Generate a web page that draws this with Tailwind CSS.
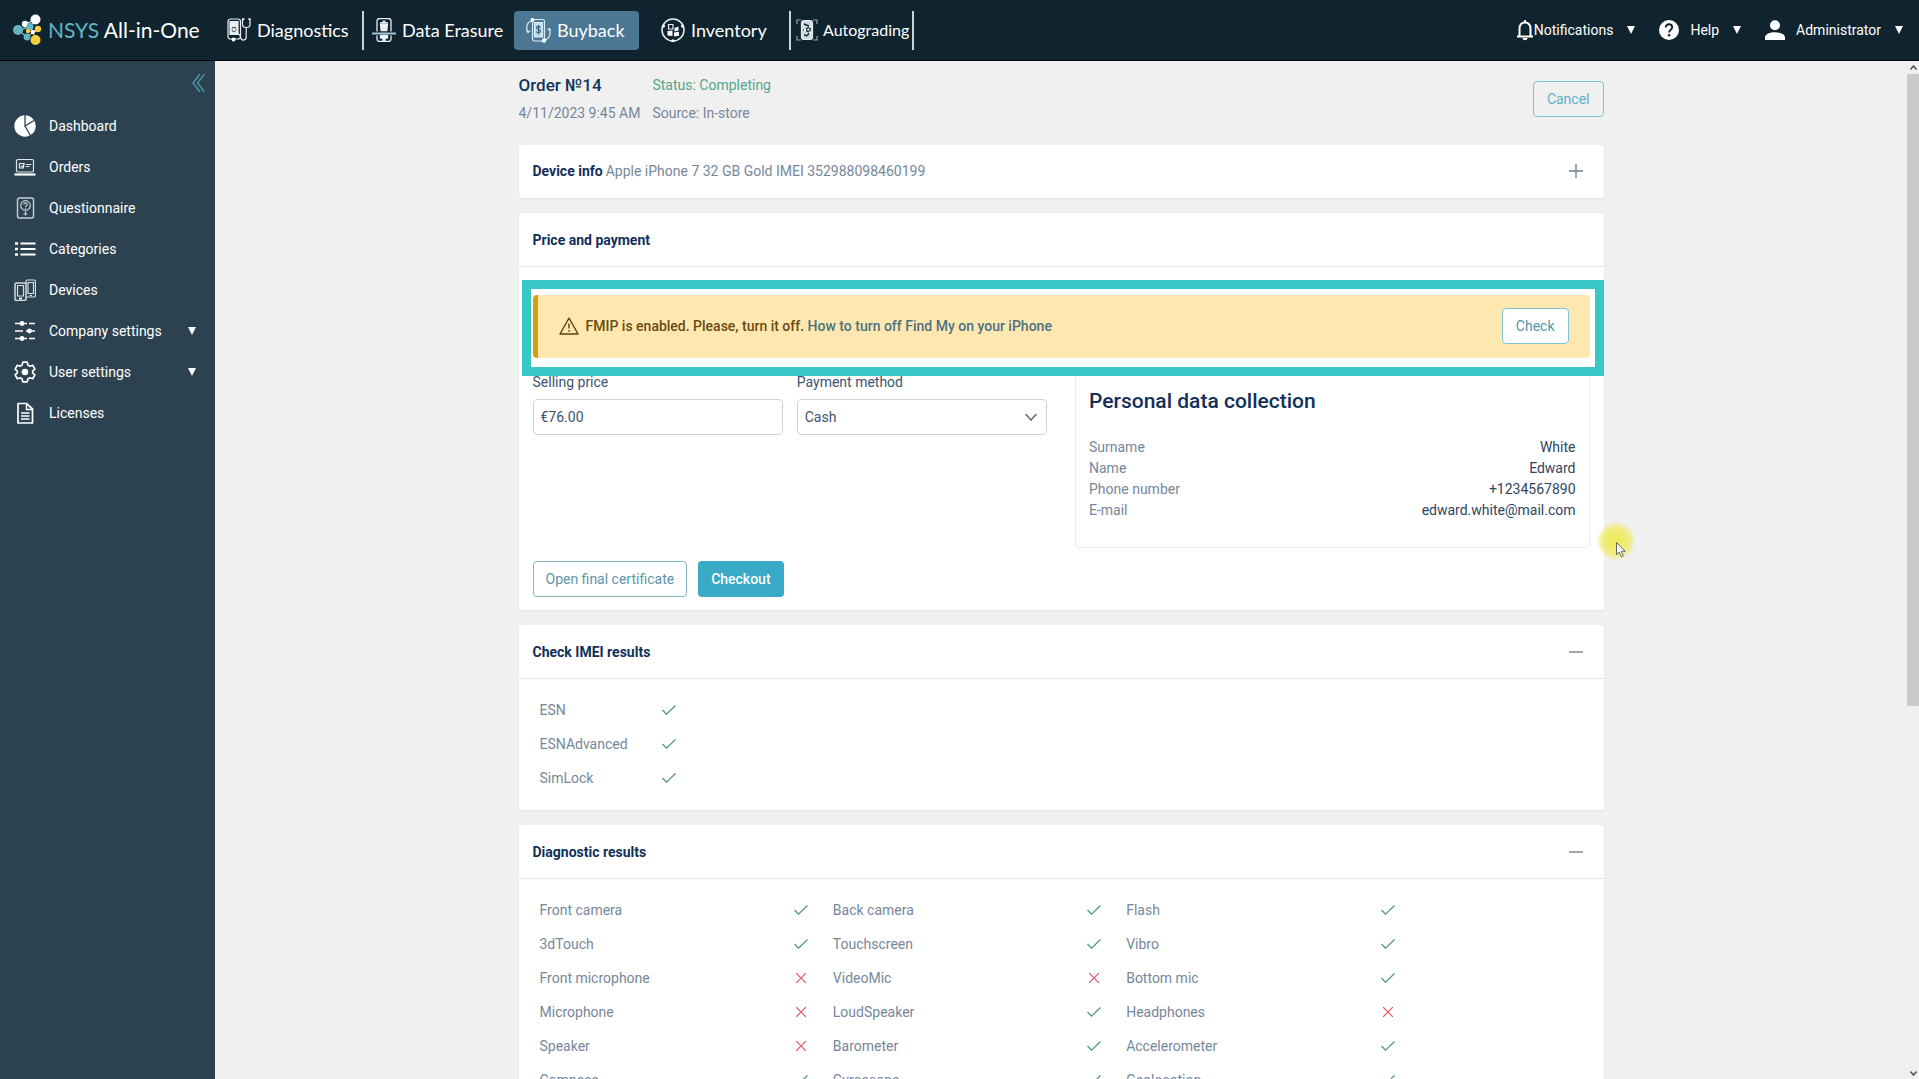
<!DOCTYPE html>
<html lang="en">
<head>
    <meta charset="UTF-8">
    <meta name="viewport" content="width=device-width, initial-scale=1.0">
    <title>NSYS Buyback - Order №14</title>
    <script src="https://cdn.jsdelivr.net/npm/@tailwindcss/browser@4"></script>
</head>
<body class="flex h-screen flex-col overflow-hidden bg-[#f0f0f0] font-['Roboto',sans-serif] text-sm text-[#76879b]">

    <!-- Top bar -->
    <header class="flex h-[61px] shrink-0 items-center border-b border-black bg-[#10242f] pb-2.5 pt-2.5 text-white">
        <a href="#" class="flex w-[215px] items-center gap-[7px] pl-[13px] font-['Lato',sans-serif] text-[21px]">
            <svg class="h-8 w-7" viewBox="0 0 28 32">
                <g stroke="#fff" stroke-width="1"><path d="M12 10 22 6M12 10l8 8-7 6M20 18l5-2M17 13l3 5" fill="none"/></g>
                <g stroke="#6fb9c6" stroke-width="1.500"><path d="M5 16 17 13M17 13l5-7M14 23 5 16"/></g>
                <path d="M20 18l3 9M15 17l5 1 5-2" stroke="#f5d039" fill="none"/>
                <circle cx="22.500" cy="5.500" r="5" fill="#fff"/><circle cx="12" cy="10" r="3.200" fill="#fff"/>
                <circle cx="5" cy="16" r="5" fill="#65b4c3"/><circle cx="17" cy="12.500" r="3.600" fill="#65b4c3"/>
                <circle cx="14" cy="23" r="3.400" fill="#65b4c3"/><circle cx="25" cy="15" r="3.200" fill="#f5d039"/>
                <circle cx="22.500" cy="26" r="5" fill="#f5d039"/><circle cx="15" cy="17" r="2.200" fill="#f5d039"/>
                <circle cx="20" cy="18" r="2.200" fill="#fff"/>
            </svg>
            <span><span class="text-[#65b4c3]">NSYS</span> All-in-One</span>
        </a>
        <nav class="flex h-full items-center font-['Lato',sans-serif] text-lg">
            <a href="#" class="flex h-[39px] w-[149px] items-center gap-1.5 border-r-2 border-[#c9d3d9] px-3">
                <svg class="size-6" viewBox="0 0 24 24" fill="none" stroke="#e8eef2" stroke-width="1.200">
                    <rect x="1" y="1" width="12.500" height="20" rx="2.500"/>
                    <path d="M3 3.500h8v13H3z" fill="#e8eef2"/>
                    <circle cx="7" cy="11.500" r="3" fill="#10242f"/><circle cx="7" cy="11.500" r="1.200" fill="#fff"/>
                    <circle cx="6.500" cy="21.500" r="2" fill="#fff" stroke="none"/>
                    <path d="M17 1h-1.500v5.500c0 4 7.500 4 7.500 0V1h-1.500M19.200 9.500V19c0 4-5.500 4-5.500.5 0-3.500-3-3.500-5-6"/>
                    <circle cx="16.500" cy="1.200" r="1" fill="#fff" stroke="none"/><circle cx="22.500" cy="1.200" r="1" fill="#fff" stroke="none"/>
                </svg>
                Diagnostics
            </a>
            <a href="#" class="flex w-[150px] items-center gap-1.5 pl-2">
                <svg class="size-6 shrink-0" viewBox="0 0 24 24" fill="none" stroke="#e8eef2" stroke-width="1.300">
                    <path d="M5 13.500V3a2.500 2.500 0 0 1 2.500-2.500h9A2.500 2.500 0 0 1 19 3v10.500M5 17.500V21a2.500 2.500 0 0 0 2.500 2.500h9A2.500 2.500 0 0 0 19 21v-3.500"/>
                    <path d="M8 5h8M10.500 3.500h3" stroke-width="1.500"/>
                    <path d="M8.500 6.500h7l-.7 6H9.200z" fill="#e8eef2"/>
                    <path d="M0 15.500h24" stroke="#a9c6d6" stroke-width="2"/>
                    <path d="M8.500 17.500h7v2.500h-7zM11 21.500h2v1.500h-2z" fill="#fff"/>
                </svg>
                Data Erasure
            </a>
            <a href="#" class="flex h-[39px] w-[125px] items-center gap-1.5 rounded bg-[#4c7794] pl-3">
                <svg class="size-[25px] shrink-0" viewBox="0 0 25 25" fill="none" stroke="#d6ecf7" stroke-width="1.200">
                    <rect x="6.500" y="1.500" width="12" height="21.500" rx="2"/>
                    <path d="M8.500 4.500h8V19h-8z" fill="#bfdfee"/>
                    <path d="M14.500 9.500c-.8-1.500-4-1.500-4 .3 0 2 4 1.200 4 3.400 0 2-3.500 1.800-4.200.2M12.500 7v9.500" stroke="#3a6480"/>
                    <path d="M1.500 14C0 8.500 1.500 4 6 2.500M23.500 11c1.500 5.500 0 9.500-5 11.500"/>
                    <path d="M.5 12l1.500 2.500L4 12.500M21.500 12l1.800-1.500 1.500 2"/>
                    <circle cx="6.500" cy="2" r="2" fill="#fff" stroke="none"/><circle cx="18" cy="22.500" r="2.200" fill="#fff" stroke="none"/>
                </svg>
                Buyback
            </a>
            <a href="#" class="flex w-[150px] items-center gap-1.5 pl-[22px]">
                <svg class="size-6 shrink-0" viewBox="0 0 24 24" fill="none" stroke="#e8eef2" stroke-width="1.500">
                    <circle cx="12" cy="12" r="11"/>
                    <path d="M7.500 6.500h4.500V11H7.500z" stroke-width="1.200"/>
                    <path d="M13.500 10l4-1.500v4l-4 1zM6.500 13l5-.5v5.500l-5-.5zM13 14.500l5-.8v4l-5 .8z" fill="#fff" stroke="none"/>
                    <circle cx="2.500" cy="8" r="1.600" fill="#fff" stroke="none"/><circle cx="21.500" cy="8" r="1.600" fill="#fff" stroke="none"/><circle cx="12" cy="22.800" r="1.600" fill="#fff" stroke="none"/>
                </svg>
                Inventory
            </a>
            <a href="#" class="flex h-[39px] w-[125px] items-center gap-[5px] border-x-2 border-[#c9d3d9] pl-[5px] text-base">
                <svg class="size-[22px] shrink-0" viewBox="0 0 22 22" fill="none" stroke="#e8eef2" stroke-width="1.200">
                    <path d="M1 5V1h4M17 1h4v4M21 17v4h-4M5 21H1v-4" stroke="#8fa5b1"/>
                    <rect x="5.500" y="1.500" width="11" height="19" rx="2.500" fill="#cfd9df"/>
                    <path d="M8 5l6 2.500-5 3.500 5 2.500-4 4M14 7.500v6M9 11H7M8 16h2" stroke="#10242f" stroke-width="1.400"/>
                    <circle cx="9" cy="11" r="1.300" fill="#fff" stroke="none"/><circle cx="14" cy="7.500" r="1.300" fill="#fff" stroke="none"/><circle cx="14" cy="13.500" r="1.300" fill="#fff" stroke="none"/>
                </svg>
                Autograding
            </a>
        </nav>
        <div class="ml-auto flex items-center pr-4">
            <button type="button" class="flex items-center">
                <svg class="h-[22px] w-[18px]" viewBox="0 0 18 22" fill="none" stroke="#fff" stroke-width="2">
                    <path d="M1 17.500h16M3.500 17V10c0-4 2-6.500 5.500-6.500s5.500 2.500 5.500 6.500v7"/>
                    <path d="M9 1v2.500"/><path d="M6.500 19h5c0 3-5 3-5 0z" fill="#fff" stroke="none"/>
                </svg>
                Notifications
                <svg class="ml-3.5 size-2" viewBox="0 0 8 8"><path d="M0 0h8L4 8z" fill="#fff"/></svg>
            </button>
            <button type="button" class="ml-6 flex items-center">
                <svg class="mr-[11px] size-5" viewBox="0 0 20 20">
                    <circle cx="10" cy="10" r="10" fill="#fff"/>
                    <path d="M6.800 7.500C6.800 3 13.200 3.300 13.200 7.300c0 2.500-3.100 2.500-3.100 5.200" fill="none" stroke="#10242f" stroke-width="1.900"/>
                    <circle cx="10.100" cy="15.300" r="1.300" fill="#10242f"/>
                </svg>
                Help
                <svg class="ml-3.5 size-2" viewBox="0 0 8 8"><path d="M0 0h8L4 8z" fill="#fff"/></svg>
            </button>
            <button type="button" class="ml-6 flex items-center">
                <svg class="mr-[11px] size-5" viewBox="0 0 20 20" fill="#fff"><circle cx="10" cy="5.200" r="5"/><path d="M0 20v-2.500c0-7 20-7 20 0V20z"/></svg>
                Administrator
                <svg class="ml-3.5 size-2" viewBox="0 0 8 8"><path d="M0 0h8L4 8z" fill="#fff"/></svg>
            </button>
        </div>
    </header>

    <div class="flex min-h-0 flex-1">
        <!-- Side menu -->
        <aside class="w-[215px] shrink-0 bg-[#2d4250] text-white">
            <div class="flex h-11 justify-end pr-2.5 pt-3">
                <button type="button" aria-label="Collapse menu" class="h-5">
                    <svg class="h-[18px] w-[13px]" viewBox="0 0 13 18" fill="none" stroke="#4796a8" stroke-width="1.500"><path d="M8 0 1 9l7 9M12.500 0l-7 9 7 9"/></svg>
                </button>
            </div>
            <nav>
                <a href="#" class="flex h-[41px] items-center gap-[13px] pl-3.5">
                    <svg class="size-[22px]" viewBox="0 0 22 22"><circle cx="11" cy="11" r="10.700" fill="#fff"/><path d="M11 0v11l9-5.500M11 11l5.500 9.500" fill="none" stroke="#2d4250" stroke-width="1.300"/></svg>
                    Dashboard
                </a>
                <a href="#" class="flex h-[41px] items-center gap-[13px] pl-3.5">
                    <svg class="size-[22px]" viewBox="0 0 22 22" fill="none" stroke="#dde5ea" stroke-width="1.200">
                        <rect x="2.500" y="3.500" width="17" height="12.500" rx="1.500"/><path d="M5.500 7.500h4v4.500h-4z"/><path d="M7 10l1.200 1L11 7.500M12 8.500h5.500M11.500 10.500h4"/>
                        <path d="M.5 18.500h21" stroke="#fff" stroke-width="2.200"/>
                    </svg>
                    Orders
                </a>
                <a href="#" class="flex h-[41px] items-center gap-[13px] pl-3.5">
                    <svg class="size-[22px]" viewBox="0 0 22 22" fill="none" stroke="#c5d2d9" stroke-width="1.200">
                        <rect x="3.500" y="1" width="16" height="20" rx="2" stroke-width="1.400"/><circle cx="11.500" cy="8.500" r="4.800"/>
                        <path d="M9.800 7.500c0-2.200 3.400-2 3.400 0 0 1.200-1.700 1.300-1.700 2.800M11.500 11v1M11.500 14.500v4M9.500 17h4"/>
                    </svg>
                    Questionnaire
                </a>
                <a href="#" class="flex h-[41px] items-center gap-[13px] pl-3.5">
                    <svg class="size-[22px]" viewBox="0 0 22 22" stroke="#fff" stroke-width="2"><path d="M6.500 5.500h15M6.500 11h15M6.500 16.500h15"/><path d="M1 5.500h3M1 11h3M1 16.500h3" stroke-width="2.600"/></svg>
                    Categories
                </a>
                <a href="#" class="flex h-[41px] items-center gap-[13px] pl-3.5">
                    <svg class="size-[22px]" viewBox="0 0 22 22" fill="none" stroke="#d3dde3" stroke-width="1.200">
                        <path d="M12 5V2.500A1.500 1.500 0 0 1 13.500 1H20a1.500 1.500 0 0 1 1.500 1.500v14A1.500 1.500 0 0 1 20 18h-8"/><path d="M14 3.500h5.500v11H14z"/><path d="M15.500 16.500H18"/>
                        <rect x="1" y="4" width="11" height="17.500" rx="1.500" stroke-width="1.500"/><path d="M3.500 6.500h6V17h-6z"/><path d="M5 19.500h3" stroke="#fff" stroke-width="1.800"/>
                    </svg>
                    Devices
                </a>
                <a href="#" class="flex h-[41px] items-center gap-[13px] pl-3.5">
                    <svg class="size-[22px]" viewBox="0 0 22 22" stroke="#fff" stroke-width="1.600"><path d="M1 3.500h12M15 3.500h6M1 11h8M12 11h9M1 18.500h12M15 18.500h6"/><g stroke="none" fill="#fff"><circle cx="8" cy="3.500" r="2.400"/><circle cx="15.500" cy="11" r="2.400"/><circle cx="8" cy="18.500" r="2.400"/></g></svg>
                    Company settings
                    <svg class="ml-auto mr-[19px] size-2" viewBox="0 0 8 8"><path d="M0 0h8L4 8z" fill="#fff"/></svg>
                </a>
                <a href="#" class="flex h-[41px] items-center gap-[13px] pl-3.5">
                    <svg class="size-[22px]" viewBox="0 0 22 22" fill="none" stroke="#fff" stroke-width="1.700" stroke-linejoin="round">
                        <path d="M8.800 1.200h4.400l.7 2.900 1.900 1.100 2.900-.9 2.200 3.800-2.200 2v1.800l2.200 2-2.200 3.800-2.900-.9-1.900 1.100-.7 2.900H8.800l-.7-2.900-1.900-1.100-2.900.9-2.200-3.800 2.200-2v-1.800l-2.200-2 2.200-3.800 2.900.9 1.900-1.100z"/>
                        <circle cx="11" cy="11" r="3.300" fill="#fff" stroke="none"/>
                    </svg>
                    User settings
                    <svg class="ml-auto mr-[19px] size-2" viewBox="0 0 8 8"><path d="M0 0h8L4 8z" fill="#fff"/></svg>
                </a>
                <a href="#" class="flex h-[41px] items-center gap-[13px] pl-3.5">
                    <svg class="size-[22px]" viewBox="0 0 22 22" fill="none" stroke="#fff" stroke-width="1.700"><path d="M4 1.500h8.500L18.500 7v14H4z" stroke-linejoin="round"/><path d="M12.500 1.500V7.500h6M7 11h8.500M7 14h8.500M7 17h8.500" stroke-width="1.400"/></svg>
                    Licenses
                </a>
            </nav>
        </aside>

        <!-- Order page -->
        <main class="min-w-0 flex-1 overflow-y-auto [scrollbar-width:none]">
            <div class="relative mx-auto flex w-full max-w-[1085px] flex-col gap-[15px] pt-2.5">
                <div class="mb-[3px] flex items-center justify-between">
                    <div class="grid grid-cols-[auto_auto] gap-x-3 leading-7">
                        <h1 class="text-[17px] font-medium text-[#12355b]">Order №14</h1>
                        <p class="text-[#52a78c]">Status: Completing</p>
                        <p>4/11/2023 9:45 AM</p>
                        <p>Source: In-store</p>
                    </div>
                    <button type="button" class="h-9 rounded border border-[#7cc4dc] px-[13px] text-[#5fb0c9]">Cancel</button>
                </div>

                <section class="flex h-[53px] items-center rounded bg-white px-3.5 pb-0.5 shadow-xs">
                    <h2 class="font-bold text-[#12305a]">Device info</h2>
                    <p class="ml-[3px]">Apple iPhone 7 32 GB Gold IMEI 352988098460199</p>
                    <button type="button" aria-label="Expand device info" class="ml-auto mr-[7px]">
                        <svg class="size-3.5" viewBox="0 0 14 14" stroke="#74808c" stroke-width="1.400"><path d="M0 7h14M7 0v14"/></svg>
                    </button>
                </section>

                <section class="rounded bg-white shadow-xs">
                    <h2 class="flex h-[54px] items-center border-b border-[#e4e6e8] px-3.5 font-bold text-[#12305a]">Price and payment</h2>
                    <div class="px-3.5 pb-[13px] pt-7">
                        <div class="relative flex h-[63px] items-center rounded border-l-[5px] border-[#d99e10] bg-[#ffe8b0] pb-0.5 pl-[21px] pr-[21px] font-medium text-[#6b4a10]">
                            <div class="absolute -bottom-[18px] -left-4 -right-3.5 -top-[15px] border-9 border-[#38c8c6]"></div>
                            <svg class="mr-[7px] h-[18px] w-5" viewBox="0 0 20 18" fill="none" stroke="#5c430f" stroke-width="1.400" stroke-linejoin="round"><path d="M10 1 19 17H1z"/><path d="M10 6.500v5M10 13v1.800"/></svg>
                            <p>FMIP is enabled. Please, turn it off. <a href="#" class="text-[#4d7183]">How to turn off Find My on your iPhone</a></p>
                            <button type="button" class="relative ml-auto h-9 rounded border border-[#7cc4d4] bg-white px-[13px] font-normal text-[#4f97ac]">Check</button>
                        </div>
                        <div class="mt-3.5 grid grid-cols-2 gap-7">
                            <form class="grid grid-cols-2 content-start gap-x-3.5 text-[#3c5470]">
                                <div>
                                    <label for="price" class="mb-[7px] block leading-5">Selling price</label>
                                    <input id="price" type="text" value="€76.00" class="h-9 w-full rounded border border-[#d0d4d8] px-[7px]">
                                </div>
                                <div>
                                    <label for="method" class="mb-[7px] block leading-5">Payment method</label>
                                    <div class="grid items-center">
                                        <select id="method" class="col-start-1 row-start-1 h-9 w-full appearance-none rounded border border-[#d0d4d8] px-[7px]">
                                            <option>Cash</option>
                                        </select>
                                        <svg class="pointer-events-none col-start-1 row-start-1 mr-2.5 h-2 w-3 justify-self-end" viewBox="0 0 12 8" fill="none" stroke="#5d6a76" stroke-width="1.500"><path d="M.5 1 6 7l5.500-6"/></svg>
                                    </div>
                                </div>
                            </form>
                            <div class="h-44 rounded border border-[#eceeef] px-[13px] pt-3.5">
                                <h3 class="mb-[22px] text-[21px] leading-7 font-medium text-[#12305a]">Personal data collection</h3>
                                <dl class="grid grid-cols-2 leading-[21px]">
                                    <dt>Surname</dt><dd class="text-right text-[#2f4560]">White</dd>
                                    <dt>Name</dt><dd class="text-right text-[#2f4560]">Edward</dd>
                                    <dt>Phone number</dt><dd class="text-right text-[#2f4560]">+1234567890</dd>
                                    <dt>E-mail</dt><dd class="text-right text-[#2f4560]">edward.white@mail.com</dd>
                                </dl>
                            </div>
                        </div>
                        <div class="mt-[13px] flex gap-[11px]">
                            <button type="button" class="h-9 rounded border border-[#82b4c4] px-3 text-[#5f96aa]">Open final certificate</button>
                            <button type="button" class="h-9 rounded bg-[#38a9c6] px-[13px] font-medium text-white">Checkout</button>
                        </div>
                    </div>
                </section>

                <section class="rounded bg-white pb-[15px] shadow-xs">
                    <div class="flex h-[54px] items-center justify-between border-b border-[#e4e6e8] pl-3.5 pr-[21px]">
                        <h2 class="font-bold text-[#12305a]">Check IMEI results</h2>
                        <button type="button" aria-label="Collapse IMEI results"><svg class="size-3.5" viewBox="0 0 14 14" stroke="#74808c" stroke-width="1.400"><path d="M0 7h14"/></svg></button>
                    </div>
                    <table class="ml-[21px] mt-3.5 w-40 table-fixed">
                        <colgroup><col><col class="w-[38px]"></colgroup>
                        <tbody id="imei-results"></tbody>
                    </table>
                </section>

                <section class="rounded bg-white pb-[15px] shadow-xs">
                    <div class="flex h-[54px] items-center justify-between border-b border-[#e4e6e8] pl-3.5 pr-[21px]">
                        <h2 class="font-bold text-[#12305a]">Diagnostic results</h2>
                        <button type="button" aria-label="Collapse diagnostic results"><svg class="size-3.5" viewBox="0 0 14 14" stroke="#74808c" stroke-width="1.400"><path d="M0 7h14"/></svg></button>
                    </div>
                    <table class="ml-[21px] mt-3.5 w-[880px] table-fixed">
                        <colgroup><col><col class="w-[39px]"><col><col class="w-[39px]"><col><col class="w-[39px]"></colgroup>
                        <tbody id="diagnostic-results"></tbody>
                    </table>
                </section>

                <!-- Mouse pointer with click highlight -->
                <div class="pointer-events-none absolute -right-8 top-[460px] size-10 rounded-full bg-radial from-[#eeea50]/90 from-20% via-[#efeb70]/80 via-50% to-transparent to-70%">
                    <svg class="absolute left-5 top-[21px] h-4 w-2.5" viewBox="0 0 10 16"><path d="M.5.5v12l2.800-2.500 2 4.800 2-.8-2-4.700h3.800z" fill="#fff" stroke="#555" stroke-width=".9"/></svg>
                </div>
            </div>
        </main>

        <!-- Scroll track -->
        <div class="flex w-3 shrink-0 flex-col items-center pt-1">
            <svg class="mb-1 h-[5px] w-[7px]" viewBox="0 0 7 5" fill="none" stroke="#555" stroke-width="1.600"><path d="M.5 4.500l3-3.500 3 3.500"/></svg>
            <div class="h-[62.3%] w-full bg-[#cacaca]"></div>
            <svg class="mb-[3px] mt-auto h-[5px] w-[7px]" viewBox="0 0 7 5" fill="none" stroke="#555" stroke-width="1.600"><path d="M.5.5l3 3.500 3-3.500"/></svg>
        </div>
    </div>

    <script>
        const passIcon = '<svg class="h-2.5 w-3.5" role="img" aria-label="Passed" viewBox="0 0 14 10" fill="none" stroke="#4f9384" stroke-width="1.200"><path d="M.5 5 4.500 9.200 13.500.5"/></svg>';
        const failIcon = '<svg class="ml-0.5 size-2.5" role="img" aria-label="Failed" viewBox="0 0 10 10" stroke="#e05565" stroke-width="1.200"><path d="M0 0l10 10M10 0 0 10"/></svg>';

        const imeiResults = [
            [['ESN', true]],
            [['ESNAdvanced', true]],
            [['SimLock', true]],
        ];

        const diagnosticResults = [
            [['Front camera', true], ['Back camera', true], ['Flash', true]],
            [['3dTouch', true], ['Touchscreen', true], ['Vibro', true]],
            [['Front microphone', false], ['VideoMic', false], ['Bottom mic', true]],
            [['Microphone', false], ['LoudSpeaker', true], ['Headphones', false]],
            [['Speaker', false], ['Barometer', true], ['Accelerometer', true]],
            [['Compass', true], ['Gyroscope', true], ['Geolocation', true]],
        ];

        // Each row is a list of [test name, passed] pairs
        const createRowsHtml = (rows) => rows.map((row) => `
            <tr class="h-[34px]">
                ${row.map(([name, passed]) => `<td class="p-0">${name}</td><td class="p-0">${passed ? passIcon : failIcon}</td>`).join('')}
            </tr>
        `).join('');

        document.getElementById('imei-results').innerHTML = createRowsHtml(imeiResults);
        document.getElementById('diagnostic-results').innerHTML = createRowsHtml(diagnosticResults);
    </script>
</body>
</html>
